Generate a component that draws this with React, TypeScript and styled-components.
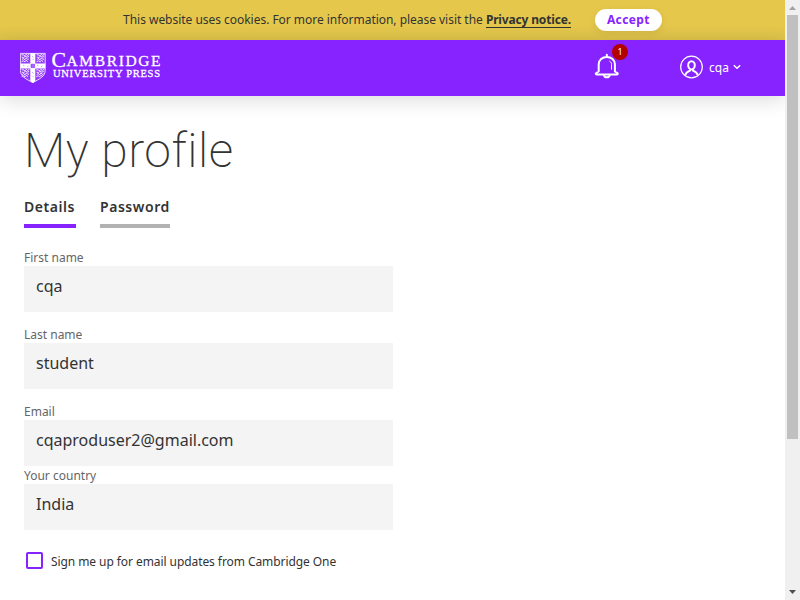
import React from "react";
import styled, { createGlobalStyle } from "styled-components";

const GlobalStyle = createGlobalStyle`
  * { box-sizing: border-box; }
  body {
    margin: 0;
    overflow: hidden;
    background: #fff;
    color: #333;
    font-family: "Noto Sans", sans-serif;
  }
`;

const Viewport = styled.div`
  display: flex;
  height: 600px;
  width: 800px;
`;

const Page = styled.div`
  flex: 1;
  display: flex;
  flex-direction: column;
  overflow: hidden;
`;

const CookieBar = styled.aside`
  display: flex;
  flex: none;
  height: 40px;
  justify-content: center;
  gap: 24px;
  padding-top: 9px;
  background: linear-gradient(#e5c84b 60%, #dec24a);
`;

const CookieText = styled.p`
  margin: 0;
  font-size: 12px;
  line-height: 21px;
  letter-spacing: -0.03px;
  white-space: pre;
`;

const PolicyLink = styled.a`
  display: inline-block;
  height: 19px;
  border-bottom: 1px solid #333;
  color: #333;
  font-weight: 700;
  letter-spacing: -0.16px;
`;

const AcceptButton = styled.button`
  width: 67px;
  height: 22px;
  padding: 0 0 1px;
  border: 0;
  border-radius: 11px;
  background: #fff;
  color: #8623ff;
  font: 700 12px/20px "Noto Sans", sans-serif;
  letter-spacing: 0.4px;
  box-shadow: 0 2px 8px rgba(0, 0, 0, 0.08);
`;

const Header = styled.header`
  display: flex;
  flex: none;
  align-items: flex-start;
  height: 56px;
  padding-left: 20px;
  background: #8623ff;
  box-shadow: 0 4px 20px rgba(0, 0, 0, 0.14);
`;

const Logo = styled.svg`
  display: block;
  margin-top: 10px;
`;

const LogoText = styled.text`
  font-family: "Liberation Serif", serif;
  fill: #fff;
  stroke: #fff;
  stroke-width: 0.3px;
`;

const BellButton = styled.div`
  position: relative;
  margin: 13px 0 0 432px;
  width: 26px;
  height: 26px;
`;

const Badge = styled.span`
  position: absolute;
  left: 18px;
  top: -9px;
  width: 16px;
  height: 16px;
  border-radius: 50%;
  background: #b50000;
  color: #fff;
  font-size: 9px;
  line-height: 16px;
  text-align: center;
`;

const Account = styled.div`
  display: flex;
  align-items: center;
  margin: 15px 0 0 60px;
  height: 24px;
  color: #fff;
  font-size: 12px;
`;

const AccountName = styled.span`
  margin: 1px 4px 0 6px;
`;

const Main = styled.main`
  padding: 22px 24px 0;
`;

const Title = styled.h1`
  margin: 0;
  font: 200 48px/64px Roboto, sans-serif;
  letter-spacing: 0.5px;
  padding-top: 1px;
`;

const Tabs = styled.nav`
  display: flex;
  gap: 24px;
  margin-top: 12px;
`;

const Tab = styled.a<{ $active?: boolean; $width: number }>`
  width: ${(p) => p.$width}px;
  height: 33px;
  border-bottom: 4px solid ${(p) => (p.$active ? "#8623ff" : "#b2b2b2")};
  font-size: 14px;
  font-weight: 600;
  line-height: 24px;
  letter-spacing: 0.55px;
  white-space: nowrap;
`;

const Form = styled.form`
  width: 369px;
  margin-top: 20px;
`;

const Field = styled.div<{ $gap: number }>`
  margin-bottom: ${(p) => p.$gap}px;
`;

const Label = styled.label`
  display: block;
  height: 18px;
  color: #666;
  font-size: 12px;
  line-height: 19px;
`;

const Value = styled.div`
  height: 46px;
  padding: 8px 12px;
  background: #f4f4f4;
  font-size: 16px;
  line-height: 24px;
`;

const UpdatesRow = styled.label`
  display: flex;
  align-items: flex-start;
  gap: 8px;
  padding-left: 2px;
  height: 18px;
  font-size: 12px;
  line-height: 19px;
  letter-spacing: -0.075px;
  white-space: nowrap;
`;

const Checkbox = styled.span`
  width: 17px;
  height: 17px;
  border: 2px solid #8623ff;
  border-radius: 2px;
`;

const Scrollbar = styled.div`
  display: flex;
  flex-direction: column;
  align-items: center;
  width: 15px;
  background: #f0f0f0;
`;

const ScrollThumb = styled.div`
  width: 11px;
  height: 424px;
  margin-bottom: auto;
  background: #c0c0c0;
`;

const fields = [
  { label: "First name", value: "cqa", gap: 13 },
  { label: "Last name", value: "student", gap: 13 },
  { label: "Email", value: "cqaproduser2@gmail.com", gap: 0 },
  { label: "Your country", value: "India", gap: 22 },
];

const Lion = ({ x, y }: { x: number; y: number }) => (
  <path
    transform={`translate(${x} ${y})`}
    d="M.5 1.3h2l1 1.2 1.6-1.7 1.3 1.1 1.9-1M.7 3.6l1.8.5 1.6-1.2 2 .7 1.8-.6M1 6l1.6-1 1 1.4 1.7-2 1.5 1.7.9-.8M.5 8.2l2-.9 1.4 1 1.2-1.5 1.8 1.4"
    fill="none"
    stroke="#fff"
    strokeWidth=".9"
  />
);

const CambridgeLogo = () => (
  <Logo width="142" height="36" viewBox="0 0 142 36">
    <path d="M.4 3.4h24.8v17.1c0 6-5.5 8.5-12.4 12C5.9 29 .4 26.5.4 20.5z" fill="#fff" fillOpacity=".12" stroke="#fff" strokeWidth=".8" />
    <Lion x={1} y={3.5} />
    <Lion x={16.2} y={3.5} />
    <Lion x={1.2} y={18.5} />
    <Lion x={15.8} y={18.5} />
    <path d="M10.3 3.2h5v10.2h10v5h-10v13l-2.5 1.5-2.5-1.5v-13H.4v-5h9.9z" fill="#fff" />
    <path d="M3 15l1.500 1M7 17l1.500-1M17 15l1.500 1M21 17l1.500-1M12 6l1.500 1.500M12.500 10l1-1M12 22l1.500 1.500M12.500 27l1-1" stroke="#8623ff" strokeOpacity=".6" strokeWidth=".7" />
    <path d="M11 14.2h3.6v3.4H11z" fill="#a969ff" stroke="#8623ff" strokeWidth=".6" />
    <LogoText x="31.5" y="16.5" fontSize="20" textLength="14.5" lengthAdjust="spacingAndGlyphs">C</LogoText>
    <LogoText x="46.5" y="16" fontSize="15.5" textLength="94" lengthAdjust="spacing">AMBRIDGE</LogoText>
    <LogoText x="33" y="27" fontSize="10.5" textLength="107" lengthAdjust="spacing">UNIVERSITY PRESS</LogoText>
  </Logo>
);

const BellIcon = () => (
  <svg width="26" height="26" viewBox="0 0 26 26" fill="none" stroke="#fff" strokeWidth="2" strokeLinejoin="round" strokeLinecap="round">
    <path d="M12.8 1.8v2M4.7 18.5v-7.2a8 7.3 0 0 1 16.200 0v7.200l2.500 1.500c.8.600.4 1.400-.4 1.400H2.600c-.8 0-1.200-.8-.4-1.400z" />
    <path d="M10 22.500c.6 2.400 5 2.400 5.600 0" />
    <path d="M15.700 8.200c1.400.8 1.800 2 1.800 3.500v4.500" strokeWidth="1" />
  </svg>
);

const UserIcon = () => (
  <svg width="23" height="24" viewBox="0 0 23 24" fill="none" stroke="#fff">
    <circle cx="11.5" cy="12" r="10.8" strokeWidth="1.2" />
    <ellipse cx="11.5" cy="10.3" rx="3.3" ry="4.1" strokeWidth="2" />
    <path d="M10 14.3v1.4c-2.2 1-4.2 2-4.7 4.300M13 14.300v1.400c2.200 1 4.200 2 4.700 4.300" strokeWidth="1.9" />
  </svg>
);

const Chevron = () => (
  <svg width="8" height="6" viewBox="0 0 8 6" fill="none" stroke="#fff" strokeWidth="1.5">
    <path d="M.8 1.2 4 4.3l3.2-3.1" />
  </svg>
);

const ScrollArrow = ({ up }: { up?: boolean }) => (
  <svg width="15" height="15" viewBox="0 0 15 15">
    <path d={up ? "M4 10h7L7.5 6z" : "M4 5h7L7.5 9z"} fill={up ? "#a3a3a3" : "#505050"} />
  </svg>
);

export default function App() {
  return (
    <>
      <GlobalStyle />
      <Viewport>
        <Page>
          <CookieBar>
            <CookieText>
              This website uses cookies. For more information, please visit the{" "}
              <PolicyLink>Privacy notice.</PolicyLink>
            </CookieText>
            <AcceptButton>Accept</AcceptButton>
          </CookieBar>
          <Header>
            <CambridgeLogo />
            <BellButton>
              <BellIcon />
              <Badge>1</Badge>
            </BellButton>
            <Account>
              <UserIcon />
              <AccountName>cqa</AccountName>
              <Chevron />
            </Account>
          </Header>
          <Main>
            <Title>My profile</Title>
            <Tabs>
              <Tab $active $width={52}>Details</Tab>
              <Tab $width={70}>Password</Tab>
            </Tabs>
            <Form>
              {fields.map((f) => (
                <Field key={f.label} $gap={f.gap}>
                  <Label>{f.label}</Label>
                  <Value>{f.value}</Value>
                </Field>
              ))}
              <UpdatesRow>
                <Checkbox />
                Sign me up for email updates from Cambridge One
              </UpdatesRow>
            </Form>
          </Main>
        </Page>
        <Scrollbar>
          <ScrollArrow up />
          <ScrollThumb />
          <ScrollArrow />
        </Scrollbar>
      </Viewport>
    </>
  );
}
